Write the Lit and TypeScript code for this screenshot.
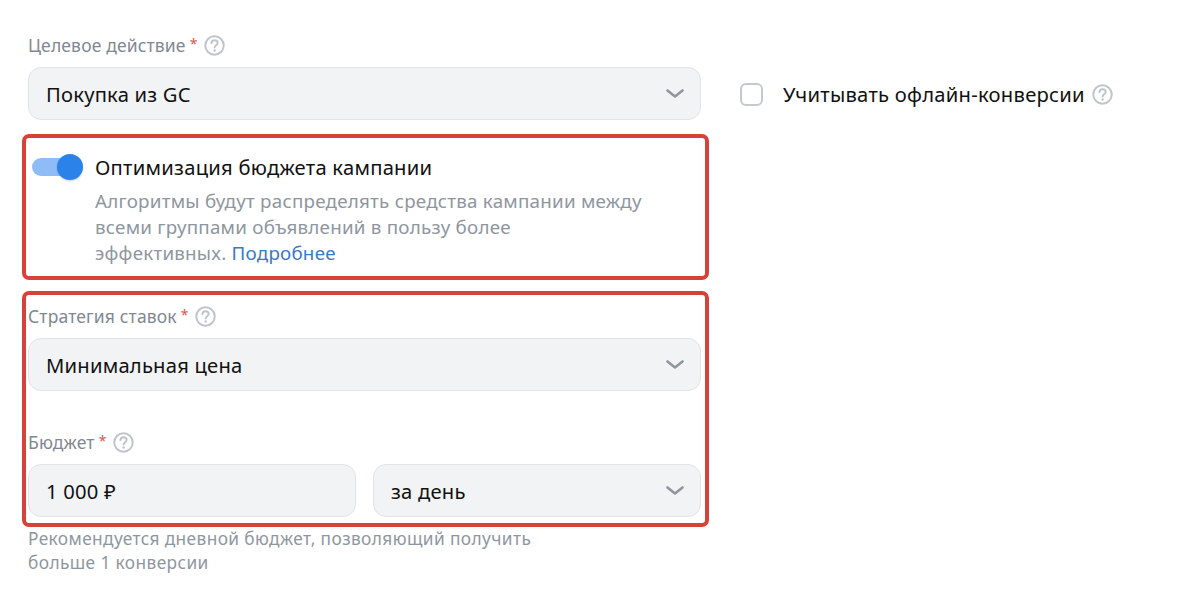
import { LitElement, html, css, svg } from "lit";
import { customElement } from "lit/decorators.js";

const help = () => html`<svg class="help" viewBox="0 0 20 20" fill="none">
  <circle cx="10" cy="10" r="8.8" stroke="#c0c5cb" stroke-width="1.9"/>
  <path d="M7.1 7.9c0-1.7 1.3-2.8 3-2.8s2.9 1 2.9 2.5c0 2.1-2.9 2.2-2.9 4.3" stroke="#c0c5cb" stroke-width="1.9" stroke-linecap="round"/>
  <circle cx="10.1" cy="14.8" r="1.15" fill="#c0c5cb"/>
</svg>`;

const chevron = svg`<path d="M1.5 1.5L9 7.5l7.5-6" stroke="#8f969f" stroke-width="2.6" stroke-linecap="round" stroke-linejoin="round" fill="none"/>`;

@customElement("app-root")
export class AppRoot extends LitElement {
  static styles = css`
    :host {
      display: block;
      height: 602px;
      background: #fff;
      font-family: "Noto Sans", "Open Sans", sans-serif;
      overflow: hidden;
    }
    .page {
      display: flex;
      align-items: flex-start;
      gap: 39px;
      padding: 36px 0 0 28px;
    }
    .left { width: 673px; display: flex; flex-direction: column; }
    .label {
      box-sizing: border-box;
      display: flex;
      align-items: center;
      height: 20px;
      padding-bottom: 2px;
      font-size: 17.5px;
      letter-spacing: .15px;
      color: #7f8893;
      white-space: nowrap;
    }
    .star { color: #d9574f; margin-left: 4px; font-size: 14px; margin-top: -3px; }
    .label .help { margin-left: 6px; width: 21px; height: 21px; }
    .field {
      box-sizing: border-box;
      height: 53px;
      margin-top: 11px;
      padding: 0 17px;
      display: flex;
      align-items: center;
      justify-content: space-between;
      background: #f2f3f5;
      border: 1px solid #e1e3e6;
      border-radius: 13px;
      font-size: 20.2px;
      letter-spacing: .22px;
      color: #111;
    }
    .field svg { margin-right: -1px; }
    .annot {
      box-sizing: border-box;
      width: 687px;
      margin-left: -6px;
      border: 4px solid #d8403a;
      border-radius: 7px;
      padding-left: 2px;
      padding-right: 4px;
    }
    .box1 {
      margin-top: 14px;
      height: 146px;
      display: grid;
      grid-template-columns: 51px 1fr;
      column-gap: 12px;
      padding-top: 15px;
      padding-left: 6px;
    }
    .toggle { position: relative; width: 51px; height: 26px; margin-top: 1px; }
    .track {
      width: 49px; height: 18px; margin-top: 4px;
      border-radius: 9px; background: #8fbcf6;
    }
    .knob {
      position: absolute; right: 0; top: 0;
      width: 26px; height: 26px; border-radius: 50%;
      background: #2b83ea;
      box-shadow: 0 1px 2px rgba(0,0,0,.2);
    }
    .title { font-size: 20.2px; letter-spacing: .25px; color: #111; line-height: 28px; }
    .desc {
      margin-top: 7px;
      font-size: 18.8px;
      letter-spacing: .23px;
      line-height: 26px;
      color: #8e96a0;
      width: 590px;
    }
    .desc a { color: #3a78c4; text-decoration: none; }
    .box2 {
      margin-top: 11px;
      height: 236px;
      padding-top: 12px;
    }
    .mt { margin-top: 42px; }
    .row { display: grid; grid-template-columns: 328px 328px; column-gap: 17px; }
    .hint {
      font-size: 17.3px;
      letter-spacing: .4px;
      line-height: 23.5px;
      color: #8e96a0;
      width: 540px;
    }
    .right {
      display: flex;
      align-items: center;
      height: 22px;
      margin-top: 47px;
      font-size: 20.2px;
      letter-spacing: .26px;
      color: #111;
      white-space: nowrap;
    }
    .check {
      box-sizing: border-box;
      width: 23px; height: 23px;
      border: 2px solid #c4c9cf;
      border-radius: 6px;
      margin-right: 20px;
    }
    .right .help { margin-left: 7px; width: 21px; height: 21px; }
  `;

  private select(text: string) {
    return html`<div class="field"><span>${text}</span>
      <svg width="18" height="9" viewBox="0 0 18 9">${chevron}</svg></div>`;
  }

  render() {
    return html`<div class="page">
      <div class="left">
        <div class="label">Целевое действие<span class="star">*</span>${help()}</div>
        ${this.select("Покупка из GC")}
        <div class="annot box1">
          <div class="toggle"><div class="track"></div><div class="knob"></div></div>
          <div>
            <div class="title">Оптимизация бюджета кампании</div>
            <div class="desc">Алгоритмы будут распределять средства кампании между<br>всеми группами объявлений в пользу более<br>эффективных. <a href="#">Подробнее</a></div>
          </div>
        </div>
        <div class="annot box2">
          <div class="label">Стратегия ставок<span class="star">*</span>${help()}</div>
          ${this.select("Минимальная цена")}
          <div class="label mt">Бюджет<span class="star">*</span>${help()}</div>
          <div class="row">
            <div class="field"><span>1 000 ₽</span></div>
            ${this.select("за день")}
          </div>
        </div>
        <div class="hint">Рекомендуется дневной бюджет, позволяющий получить<br>больше 1 конверсии</div>
      </div>
      <div class="right"><div class="check"></div>Учитывать офлайн-конверсии${help()}</div>
    </div>`;
  }
}
